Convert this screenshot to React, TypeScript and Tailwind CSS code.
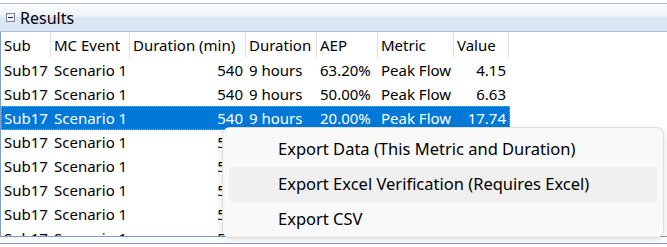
const columns = [
    { key: 'sub', label: 'Sub', width: 'w-[50px]', align: 'text-left' },
    { key: 'event', label: 'MC Event', width: 'w-[79px]', align: 'text-left' },
    { key: 'mins', label: 'Duration (min)', width: 'w-[116px]', align: 'text-right' },
    { key: 'dur', label: 'Duration', width: 'w-[71px]', align: 'text-left' },
    { key: 'aep', label: 'AEP', width: 'w-[61px]', align: 'text-left' },
    { key: 'metric', label: 'Metric', width: 'w-[76px]', align: 'text-left' },
    { key: 'value', label: 'Value', width: 'w-[55px]', align: 'text-right' },
]

const rows = [
    { sub: 'Sub17', event: 'Scenario 1', mins: '540', dur: '9 hours', aep: '63.20%', metric: 'Peak Flow', value: '4.15' },
    { sub: 'Sub17', event: 'Scenario 1', mins: '540', dur: '9 hours', aep: '50.00%', metric: 'Peak Flow', value: '6.63' },
    { sub: 'Sub17', event: 'Scenario 1', mins: '540', dur: '9 hours', aep: '20.00%', metric: 'Peak Flow', value: '17.74' },
    { sub: 'Sub17', event: 'Scenario 1', mins: '540', dur: '9 hours', aep: '10.00%', metric: 'Peak Flow', value: '24.10' },
    { sub: 'Sub17', event: 'Scenario 1', mins: '540', dur: '9 hours', aep: '5.00%', metric: 'Peak Flow', value: '30.52' },
    { sub: 'Sub17', event: 'Scenario 1', mins: '540', dur: '9 hours', aep: '2.00%', metric: 'Peak Flow', value: '39.87' },
    { sub: 'Sub17', event: 'Scenario 1', mins: '540', dur: '9 hours', aep: '1.00%', metric: 'Peak Flow', value: '47.03' },
    { sub: 'Sub17', event: 'Scenario 1', mins: '540', dur: '9 hours', aep: '0.50%', metric: 'Peak Flow', value: '54.40' },
]

const menuItems = [
    'Export Data (This Metric and Duration)',
    'Export Excel Verification (Requires Excel)',
    'Export CSV',
]

export default function App() {
    return (
        <div className="relative h-[247px] w-[667px] overflow-hidden bg-white pt-[3px] font-['Noto_Sans',sans-serif] text-black">
            {/* Panel header */}
            <div className="flex h-[29px] items-center gap-[5px] border-t border-b border-[#a9bcd4] bg-[linear-gradient(to_bottom,#fbfcfe_0%,#eef3f9_45%,#dce7f5_50%,#d8e4f4_100%)] pl-[6px]">
                <span className="flex h-[9px] w-[9px] items-center justify-center border border-[#7b8799] bg-[#eef2f8]">
                    <span className="h-px w-[5px] bg-[#1e2a3a]" />
                </span>
                <span className="text-[16px] leading-none">Results</span>
            </div>

            {/* Grid */}
            <div className="h-[205px] overflow-hidden border-b border-l border-[#7d9cc8]">
                <div className="flex h-[26px] items-center">
                    {columns.map((c) => (
                        <div key={c.key} className={`${c.width} h-full shrink-0 overflow-hidden whitespace-nowrap border-r border-[#e3e3e3] pl-[3px] text-[15px] leading-[26px]`}>
                            {c.label}
                        </div>
                    ))}
                </div>
                {rows.map((r, i) => {
                    const selected = i === 2
                    return (
                        <div
                            key={i}
                            className={`flex h-[24px] w-[509px] items-center pt-px text-[15px] ${selected ? 'bg-[#0078d7] text-white outline-1 -outline-offset-1 outline-dotted outline-[#e89a3c]' : ''}`}
                        >
                            {columns.map((c) => (
                                <div key={c.key} className={`${c.width} shrink-0 whitespace-nowrap px-[3px] ${c.align}`}>
                                    {r[c.key as keyof typeof r]}
                                </div>
                            ))}
                        </div>
                    )
                })}
            </div>
            <div className="mt-[6px] h-px bg-[#7d9cc8]" />

            {/* Context menu */}
            <div className="absolute left-[222px] top-[127px] h-[111px] w-[442px] rounded-[8px] border border-[#dedede] bg-[#f9f9f9] px-[6px] pt-[4px] pb-[2px] shadow-[0_2px_6px_rgba(0,0,0,0.12)]">
                {menuItems.map((m, i) => (
                    <div
                        key={m}
                        className={`flex h-[35px] items-center rounded-[4px] pl-[49px] text-[16.5px] ${i === 1 ? 'bg-[#f0f0f0]' : ''}`}
                    >
                        {m}
                    </div>
                ))}
            </div>
        </div>
    )
}
